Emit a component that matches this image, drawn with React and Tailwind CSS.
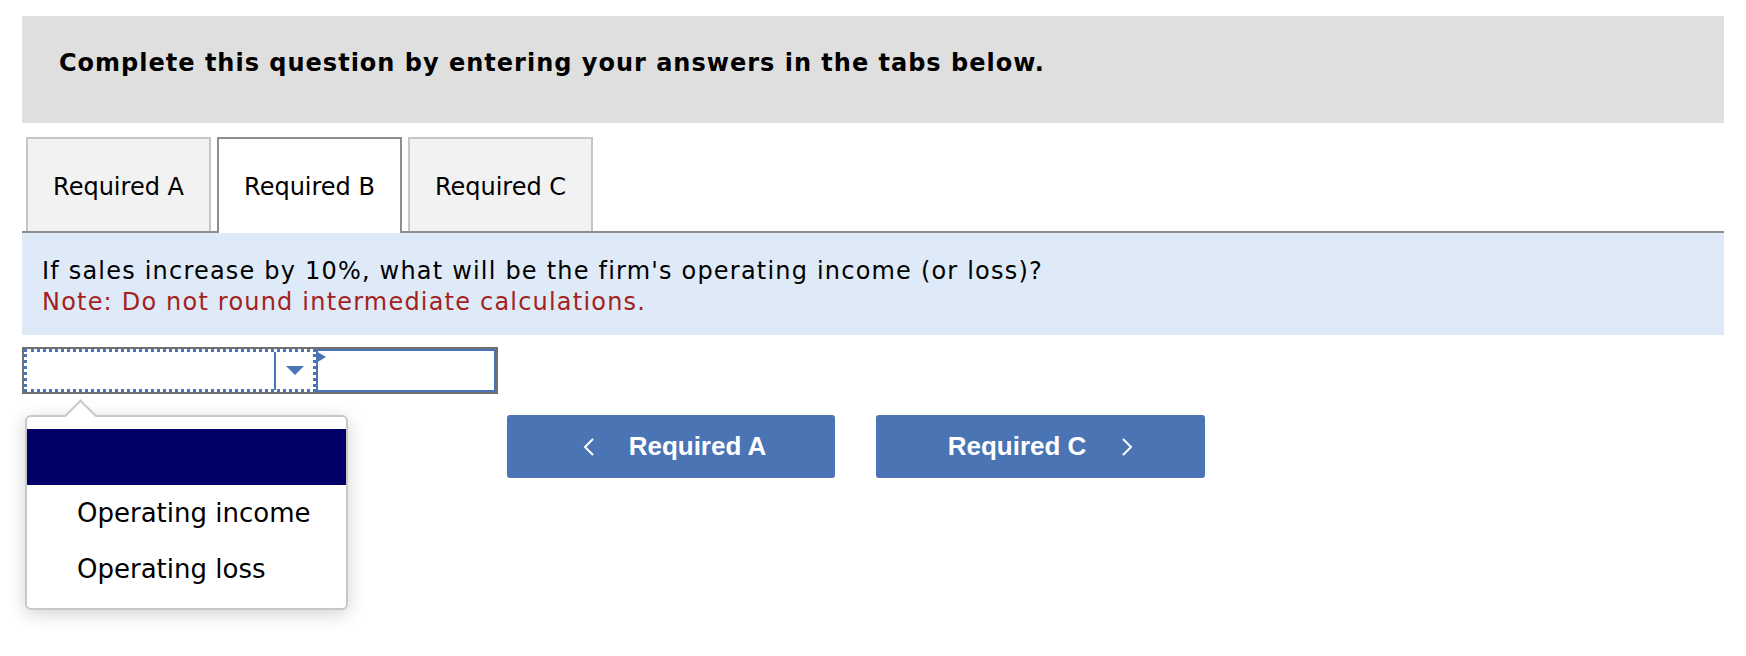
import { useState } from "react";

const tabs = ["Required A", "Required B", "Required C"];
const options = ["Operating income", "Operating loss"];

const Chevron = ({ dir }) => (
  <svg width="12" height="18" viewBox="0 0 12 18" className="shrink-0">
    <polyline
      points={dir === "left" ? "10,1 2,9 10,17" : "2,1 10,9 2,17"}
      fill="none"
      stroke="white"
      strokeWidth="2"
    />
  </svg>
);

const App = () => {
  const [active, setActive] = useState(1);

  return (
    <div className="min-h-screen w-full bg-white px-[22px] pt-4 font-['DejaVu_Sans',sans-serif] text-black">
      {/* instructions */}
      <div className="h-[107px] bg-[#dfdfdf] pl-[37px] pt-[33px]">
        <p className="text-[24px] font-bold leading-[28px] tracking-[1px]">
          Complete this question by entering your answers in the tabs below.
        </p>
      </div>

      {/* tabs */}
      <div className="mt-[14px] flex items-end gap-[6px] border-b-2 border-[#8e8e8e] pl-1">
        {tabs.map((t, i) => (
          <button
            key={t}
            onClick={() => setActive(i)}
            className={`w-[185px] border-2 border-b-0 pt-[4px] text-center text-[24px] ${
              i === active
                ? "-mb-[2px] h-[96px] border-[#8e8e8e] bg-white pb-[2px]"
                : "h-[94px] border-[#c6c6c6] bg-[#f2f2f2]"
            }`}
          >
            {t}
          </button>
        ))}
      </div>

      {/* question */}
      <div className="bg-[#deeaf7] px-5 pb-[17px] pt-[23px] text-[24px] leading-[31px] tracking-[1.2px]">
        <p>If sales increase by 10%, what will be the firm's operating income (or loss)?</p>
        <p className="text-[#a3221e]">Note: Do not round intermediate calculations.</p>
      </div>

      {/* answer row */}
      <div className="relative mt-3 flex h-[47px] w-[476px] border-2 border-[#707070]">
        <div className="flex w-[292px] items-center justify-end border-[3px] border-dotted border-[#4a74b4]">
          <div className="h-[38px] w-[2px] bg-[#4a74b4]" />
          <div className="flex w-[37px] justify-center">
            <div className="h-0 w-0 border-x-[9px] border-t-[9px] border-x-transparent border-t-[#4a74b4]" />
          </div>
        </div>
        <div className="relative flex-1 border-2 border-[#4a74b4]">
          <div className="absolute -left-[2px] top-[0px] h-0 w-0 border-y-[6px] border-l-[10px] border-y-transparent border-l-[#4a74b4]" />
        </div>

        {/* open dropdown */}
        <div className="absolute left-[1px] top-[66px] z-10 w-[323px] rounded-[6px] border-2 border-[#c8c8c8] bg-white pb-[11px] pt-3 shadow-[0_4px_18px_rgba(0,0,0,0.18)]">
          <div className="absolute -top-[13px] left-[42px] h-[23px] w-[23px] rotate-45 border-l-2 border-t-2 border-[#c8c8c8] bg-white" />
          <div className="relative h-[56px] bg-[#000066]" />
          {options.map((o) => (
            <div key={o} className="flex h-[56px] items-center pl-[50px] text-[26px]">
              {o}
            </div>
          ))}
        </div>
      </div>

      {/* navigation */}
      <div className="mt-[21px] flex gap-[41px] pl-[485px] font-['Liberation_Sans',Arial,sans-serif] text-[26px] font-bold text-white">
        <button className="flex h-[63px] w-[328px] items-center justify-center gap-[34px] rounded-[3px] bg-[#4a74b4] pl-[7px]">
          <Chevron dir="left" />
          <span>Required A</span>
        </button>
        <button className="flex h-[63px] w-[329px] items-center justify-center gap-[35px] rounded-[3px] bg-[#4a74b4]">
          <span>Required C</span>
          <Chevron dir="right" />
        </button>
      </div>
    </div>
  );
};

export default App;
